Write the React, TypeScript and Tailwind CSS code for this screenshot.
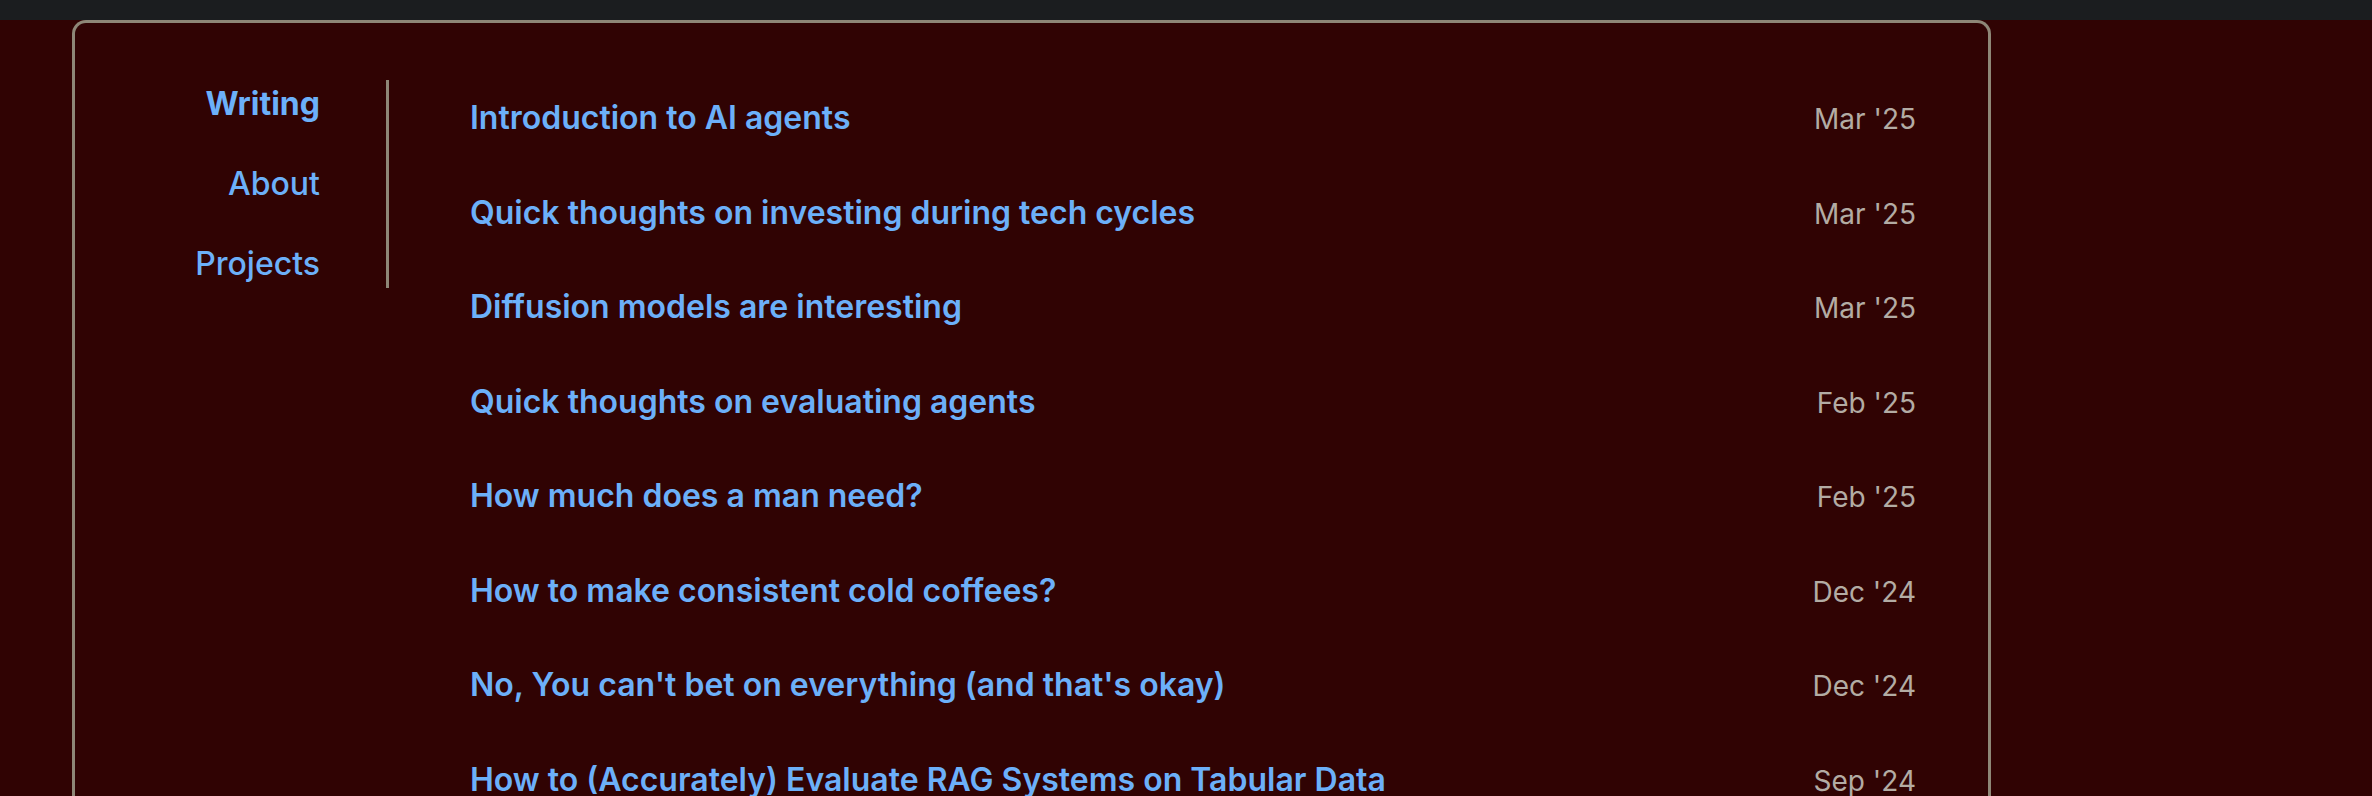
import React from "react";

const posts: { title: string; date: string }[] = [
  { title: "Introduction to AI agents", date: "Mar '25" },
  { title: "Quick thoughts on investing during tech cycles", date: "Mar '25" },
  { title: "Diffusion models are interesting", date: "Mar '25" },
  { title: "Quick thoughts on evaluating agents", date: "Feb '25" },
  { title: "How much does a man need?", date: "Feb '25" },
  { title: "How to make consistent cold coffees?", date: "Dec '24" },
  { title: "No, You can't bet on everything (and that's okay)", date: "Dec '24" },
  { title: "How to (Accurately) Evaluate RAG Systems on Tabular Data", date: "Sep '24" },
  { title: "Building reliable pipelines", date: "Aug '24" },
];

export default function App() {
  return (
    <div
      className="min-h-screen w-full bg-[#300303] overflow-hidden"
      style={{ fontFamily: "Inter, 'Noto Sans', sans-serif" }}
    >
      <div className="h-[20px] w-full bg-[#1b1d1f]" />
      <div className="h-[776px] overflow-hidden pl-[72px]">
        <div className="w-[1919px] rounded-t-[14px] border-[3px] border-b-0 border-[#8e8777] pt-[48px] pr-[72px] flex items-start min-h-[900px]">
          <nav className="mt-[9px] w-[314px] flex items-start shrink-0">
            <div className="w-[245px] flex flex-col items-end gap-[32px] text-[32px] leading-[48px] text-[#6cb0f9]">
              <a className="font-bold">Writing</a>
              <a className="font-medium">About</a>
              <a className="font-medium">Projects</a>
            </div>
            <div className="ml-[66px] w-[3px] h-[208px] bg-[#8e8777]" />
          </nav>
          <ul className="flex-1 flex flex-col pl-[81px]">
            {posts.map((p) => (
              <li
                key={p.title}
                className="flex items-baseline justify-between py-[23.25px]"
              >
                <a className="text-[32px] leading-[48px] font-semibold text-[#6cb0f9]">{p.title}</a>
                <span className="text-[28px] leading-[44px] text-[#b3aca4]">{p.date}</span>
              </li>
            ))}
          </ul>
        </div>
      </div>
    </div>
  );
}
